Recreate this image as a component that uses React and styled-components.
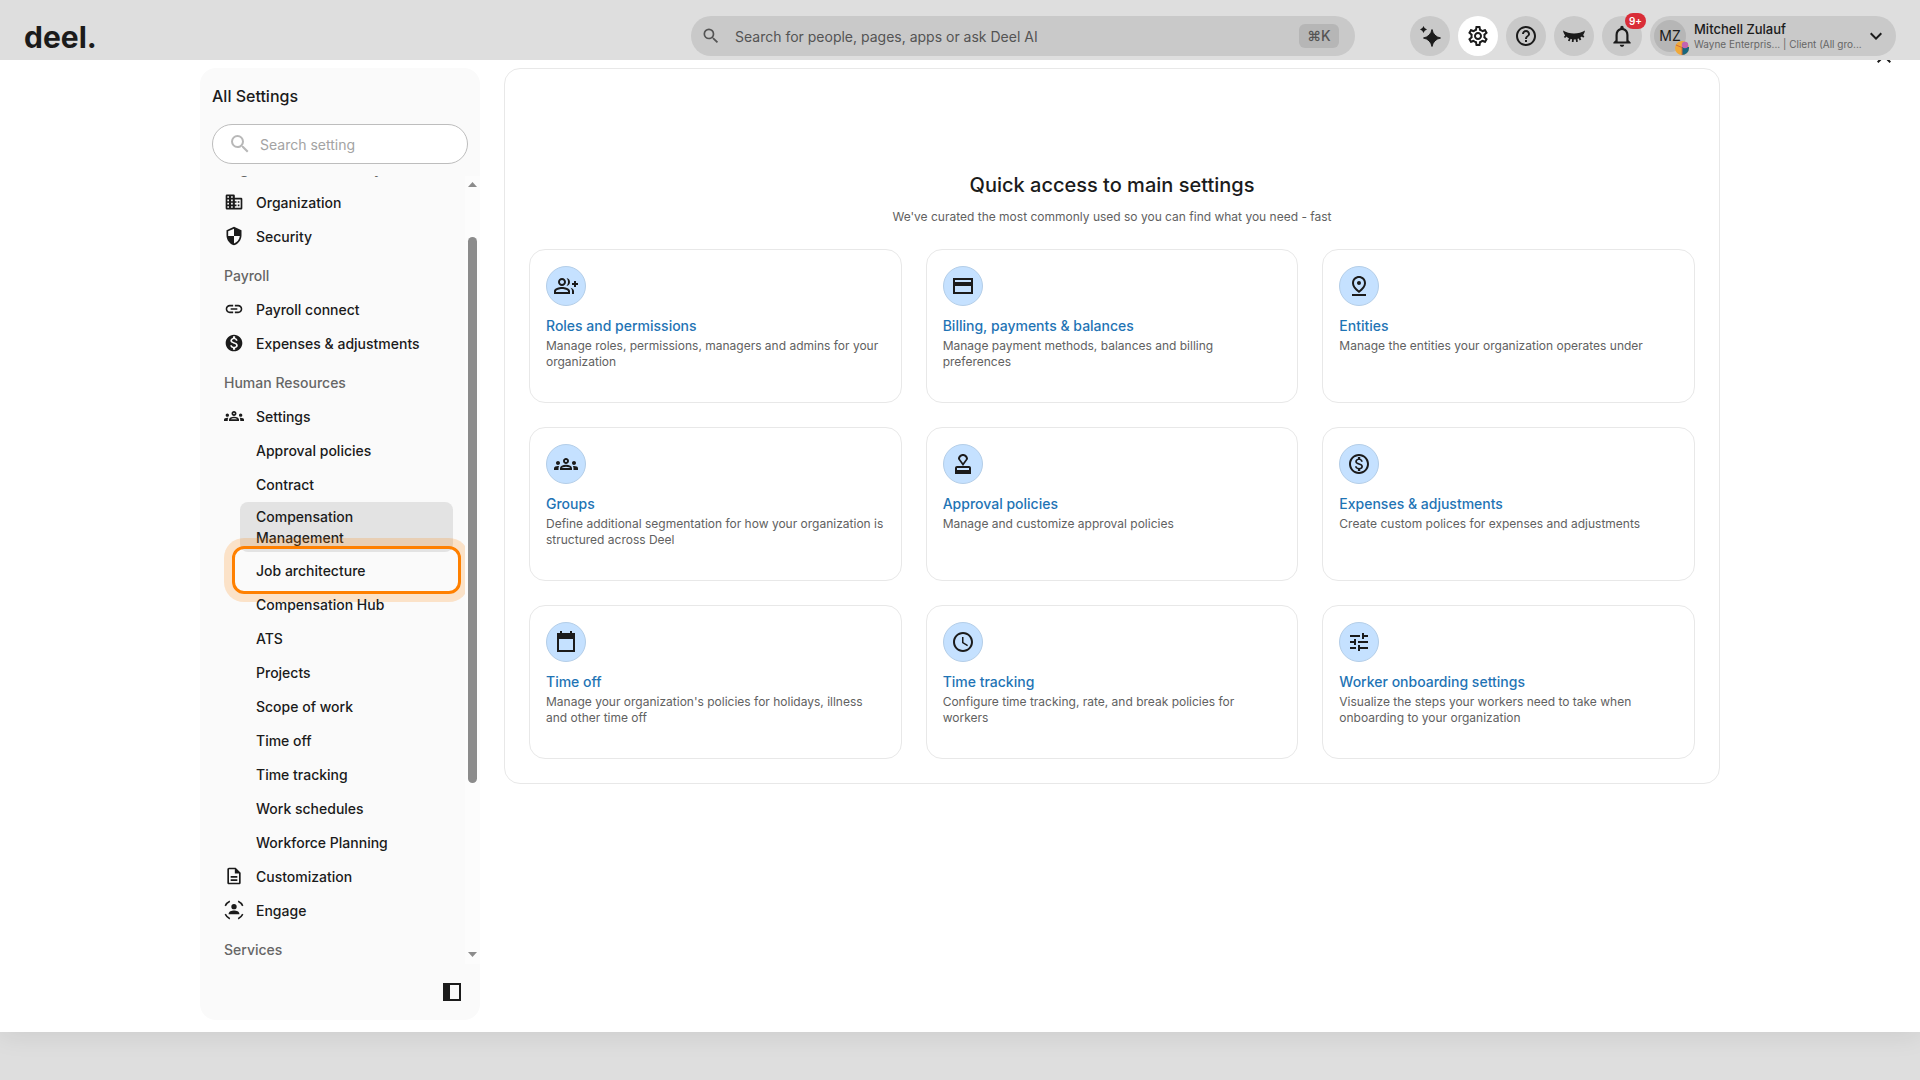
import React from "react";
import styled, { createGlobalStyle } from "styled-components";
import {
  MdAccessTime,
  MdClose,
  MdHelpOutline,
  MdKeyboardArrowDown,
  MdLink,
  MdMonetizationOn,
  MdNotificationsNone,
  MdOutlineApproval,
  MdOutlineDescription,
  MdOutlineGroups,
  MdOutlineMonetizationOn,
  MdOutlinePinDrop,
  MdOutlineSettings,
  MdSearch,
  MdSecurity,
  MdTune,
} from "react-icons/md";

const GlobalStyle = createGlobalStyle`
  * {
    box-sizing: border-box;
  }
  body {
    margin: 0;
    background: #dedede;
    color: #1b1b1b;
    font-family: Inter, "Liberation Sans", sans-serif;
    font-size: 14px;
  }
  button, input {
    font-family: inherit;
    font-size: inherit;
    color: inherit;
  }
  button {
    padding: 0;
    border: 0;
    background: none;
    cursor: pointer;
  }
  a {
    color: inherit;
    text-decoration: none;
  }
  h1, h2, h3, p, ul {
    margin: 0;
    padding: 0;
  }
  ul {
    list-style: none;
  }
  svg {
    display: block;
    flex: none;
  }
`;

const Page = styled.div`
  position: relative;
  min-height: 100vh;
  display: flex;
  flex-direction: column;
  padding-bottom: 48px;
`;

const Header = styled.header`
  position: relative;
  z-index: 2;
  display: flex;
  align-items: center;
  height: 60px;
  padding: 12px 24px 0;
  background: #dedede;
`;

const Logo = styled.a`
  margin-right: auto;
  padding-top: 2px;
  font-size: 30px;
  font-weight: 700;
  line-height: 40px;
`;

const HeaderSearch = styled.label`
  display: flex;
  align-items: center;
  flex: 0 1 664px;
  height: 40px;
  margin-right: 55px;
  padding: 0 16px 0 10px;
  gap: 14px;
  border-radius: 20px;
  background: #c9c9c9;
  color: #545454;
`;

const HeaderInput = styled.input`
  flex: 1;
  min-width: 0;
  padding: 0;
  border: 0;
  outline: 0;
  background: none;
  &::placeholder {
    color: #545454;
    opacity: 1;
  }
`;

const Shortcut = styled.kbd`
  width: 40px;
  border-radius: 6px;
  background: #b6b6b6;
  font-family: inherit;
  font-size: 14px;
  font-weight: 500;
  line-height: 24px;
  text-align: center;
`;

const Actions = styled.div`
  display: flex;
  gap: 8px;
`;

const RoundButton = styled.button`
  position: relative;
  display: flex;
  align-items: center;
  justify-content: center;
  width: 40px;
  height: 40px;
  border-radius: 50%;
  background: ${(props) => (props.$active ? "#ffffff" : "#c9c9c9")};
`;

const CountBadge = styled.span`
  position: absolute;
  top: -3px;
  right: -4px;
  padding: 0 4px;
  border-radius: 8px;
  background: #d92d37;
  color: white;
  font-size: 10px;
  font-weight: 600;
  line-height: 16px;
`;

const Profile = styled.button`
  display: flex;
  align-items: center;
  width: 246px;
  height: 40px;
  padding: 0 8px 0 4px;
  border-radius: 20px;
  background: #c9c9c9;
  text-align: left;
`;

const Avatar = styled.span`
  position: relative;
  flex: none;
  width: 32px;
  margin-right: 8px;
  border-radius: 50%;
  background: #b6b6b6;
  line-height: 32px;
  text-align: center;
`;

const AvatarBadge = styled.span`
  position: absolute;
  right: -3px;
  bottom: -3px;
`;

const ProfileText = styled.span`
  flex: 1;
  display: flex;
  flex-direction: column;
  min-width: 0;
  white-space: nowrap;
`;

const ProfileName = styled.span`
  font-size: 13px;
  font-weight: 500;
  line-height: 16px;
`;

const ProfileOrg = styled.span`
  color: #666666;
  font-size: 10px;
  line-height: 14px;
`;

const CloseButton = styled.button`
  position: absolute;
  top: 44px;
  right: 24px;
`;

const Main = styled.main`
  flex: 1;
  display: flex;
  justify-content: center;
  padding: 8px 24px 12px;
  background: white;
  box-shadow: 0 4px 24px rgba(0, 0, 0, 0.08);
`;

const Content = styled.div`
  flex: 0 1 1520px;
  display: flex;
  align-items: flex-start;
  gap: 24px;
`;

const Sidebar = styled.aside`
  flex: none;
  align-self: stretch;
  display: flex;
  flex-direction: column;
  width: 280px;
  border-radius: 16px;
  background: #fafafa;
`;

const SidebarTitle = styled.h2`
  padding: 16px 12px;
  font-size: 16px;
  font-weight: 500;
  line-height: 24px;
`;

const SidebarSearch = styled.label`
  display: flex;
  align-items: center;
  height: 40px;
  margin: 0 12px 12px;
  padding: 0 15px;
  gap: 8px;
  border: 1px solid #bdbdbd;
  border-radius: 20px;
  background: white;
  color: #b8b8b8;
`;

const SidebarInput = styled.input`
  flex: 1;
  min-width: 0;
  padding: 0;
  border: 0;
  outline: 0;
  background: none;
  &::placeholder {
    color: #a3a3a3;
    opacity: 1;
  }
`;

const NavArea = styled.div`
  display: flex;
  height: 788px;
  overflow: hidden;
`;

const Nav = styled.nav`
  flex: 1;
  margin-top: -30px;
`;

const GroupTitle = styled.h3`
  padding: 12px 24px 6px;
  color: #666666;
  font-size: 14px;
  font-weight: 500;
  line-height: 21px;
`;

const NavEntry = styled.li`
  display: flex;
  flex-direction: column;
`;

const NavItem = styled.a`
  display: flex;
  align-items: center;
  min-height: 32px;
  margin: 1px 12px;
  padding: 4px 12px;
  gap: 12px;
  border-radius: 8px;
  font-weight: 500;
  line-height: 21px;
`;

const SubItem = styled(NavItem)`
  position: relative;
  margin: 1px 12px 1px 40px;
  padding: 4px 16px;
  background: ${(props) => (props.$hovered ? "#e3e3e3" : "none")};
`;

const FocusRing = styled.span`
  position: absolute;
  inset: -8px;
  border: 3px solid #ff8000;
  border-radius: 12px;
  box-shadow: 0 0 0 8px rgba(255, 128, 0, 0.2);
`;

const ScrollTrack = styled.div`
  position: relative;
  z-index: 1;
  display: flex;
  flex-direction: column;
  align-items: center;
  width: 15px;
  padding: 6px 0 7px;
  background: #fcfcfc;
  color: #8b8b8b;
`;

const ScrollThumb = styled.div`
  width: 9px;
  height: 546px;
  margin: 50px 0 auto;
  border-radius: 5px;
  background: #8b8b8b;
`;

const SidebarFooter = styled.div`
  display: flex;
  justify-content: flex-end;
  padding: 16px 16px 0;
`;

const Panel = styled.section`
  flex: 1;
  padding: 104px 24px 24px;
  border: 1px solid #e8e8e8;
  border-radius: 16px;
`;

const PanelTitle = styled.h1`
  font-size: 20px;
  font-weight: 500;
  line-height: 24px;
  text-align: center;
`;

const PanelText = styled.p`
  margin: 12px 0 24px;
  color: #616161;
  font-size: 12px;
  line-height: 16px;
  text-align: center;
`;

const CardGrid = styled.div`
  display: grid;
  grid-template-columns: repeat(3, 1fr);
  gap: 24px;
`;

const Card = styled.a`
  padding: 16px;
  border: 1px solid #e8e8e8;
  border-radius: 16px;
`;

const CardIcon = styled.span`
  display: flex;
  align-items: center;
  justify-content: center;
  width: 40px;
  height: 40px;
  border: 1px solid #b4cee8;
  border-radius: 50%;
  background: #c5e1ff;
`;

const CardTitle = styled.h3`
  margin: 10px 0 2px;
  color: #1f74b5;
  font-size: 14px;
  font-weight: 500;
  line-height: 20px;
`;

const CardText = styled.p`
  min-height: 48px;
  color: #616161;
  font-size: 12px;
  line-height: 16px;
`;

const Glyph = ({ size = 24, children }) => (
  <svg width={size} height={size} viewBox="0 0 24 24" fill="currentColor">
    {children}
  </svg>
);

const SparkleIcon = () => (
  <Glyph>
    <path d="M14 5.500Q15.500 12.500 22.500 14Q15.500 15.500 14 22.500Q12.500 15.500 5.500 14Q12.500 12.500 14 5.500Z" stroke="currentColor" strokeLinejoin="round" />
    <path d="M5.500 2Q6.200 4.800 9 5.500Q6.200 6.200 5.500 9Q4.800 6.200 2 5.500Q4.800 4.800 5.500 2Z" />
  </Glyph>
);

const ClosedEyeIcon = () => (
  <Glyph>
    <path d="M1 6.500C7 10.500 17 10.500 23 6.500C22 12 17.500 15.500 12 15.500S2 12 1 6.500Z" />
    <path
      d="M4.500 11L2.500 13.500M8 14L6.800 17M11 14.500L10.700 18M14.500 14.500L15 17.800M17 13L18.500 16M19.500 11L21.800 13"
      stroke="currentColor"
      strokeWidth="1.800"
    />
  </Glyph>
);

const OfficeIcon = () => (
  <Glyph size={20}>
    <path
      fillRule="evenodd"
      d="M3.500 3H11.500Q13 3 13 4.500V7H20.500Q22 7 22 8.500V19.500Q22 21 20.500 21H3.500Q2 21 2 19.500V4.500Q2 3 3.500 3ZM4 5V7H6V5ZM8.500 5V7H10.500V5ZM4 9V11H6V9ZM8.500 9V11H10.500V9ZM4 13V15H6V13ZM8.500 13V15H10.500V13ZM4 17V19H6V17ZM8.500 17V19H10.500V17ZM13 9V11H15V13H13V15H15V17H13V19H20V9ZM16.500 11H18.500V13H16.500ZM16.500 15H18.500V17H16.500Z"
    />
  </Glyph>
);

const EngageIcon = () => (
  <Glyph size={20}>
    <circle cx="12" cy="8" r="3.200" />
    <path d="M5.500 17C5.500 13.800 9 12.600 12 12.600S18.500 13.800 18.500 17Z" />
    <path
      d="M1.500 7A11.500 11.500 0 0 1 7 1.500M17 1.500A11.500 11.500 0 0 1 22.500 7M22.500 17A11.500 11.500 0 0 1 17 22.500M7 22.500A11.500 11.500 0 0 1 1.500 17"
      fill="none"
      stroke="currentColor"
      strokeWidth="1.800"
    />
  </Glyph>
);

const GroupAddIcon = () => (
  <Glyph>
    <path d="M22 9V7h-2v2h-2v2h2v2h2v-2h2V9zM8 12c2.210 0 4-1.790 4-4s-1.790-4-4-4-4 1.790-4 4 1.790 4 4 4zm0-6c1.100 0 2 .9 2 2s-.9 2-2 2-2-.9-2-2 .9-2 2-2zM8 13c-2.670 0-8 1.340-8 4v3h16v-3c0-2.660-5.330-4-8-4zm6 5H2v-.99C2.200 16.290 5.300 15 8 15s5.800 1.290 6 2v1zM12.510 4.050C13.430 5.110 14 6.490 14 8s-.57 2.890-1.490 3.950C14.470 11.700 16 10.040 16 8s-1.530-3.700-3.490-3.950zM16.530 13.830C17.420 14.660 18 15.700 18 17v3h2v-3c0-1.450-1.590-2.510-3.470-3.170z" />
  </Glyph>
);

const CreditCardIcon = () => (
  <Glyph>
    <path d="M2 4v16h20V4H2zm18 14H4v-6h16v6zm0-10H4V6h16v2z" />
  </Glyph>
);

const CalendarIcon = () => (
  <Glyph>
    <path d="M21 3h-3V1h-2v2H8V1H6v2H3v19h18V3zm-2 17H5V9h14v11z" />
  </Glyph>
);

const PanelToggleIcon = () => (
  <svg width="24" height="24" viewBox="0 0 24 24">
    <path fill="currentColor" d="M3 3h18v18H3zM10 5v14h9V5z" fillRule="evenodd" />
  </svg>
);

const TeamIcon = () => (
  <svg width="14" height="14" viewBox="0 0 14 14">
    <circle cx="7" cy="7" r="7" fill="#f0a93a" />
    <path d="M7 6V14A7 7 0 0 0 14 7V6Z" fill="#17677f" />
    <circle cx="10" cy="4" r="3.200" fill="#c463b0" />
    <path d="M1 4L7 6.500V14" fill="none" stroke="#d06a3c" />
  </svg>
);

const Arrow = ({ down }) => (
  <svg width="9" height="5" viewBox="0 0 9 5" fill="currentColor">
    <path d={down ? "M0 0h9L4.500 5z" : "M0 5h9L4.500 0z"} />
  </svg>
);

const navGroups = [
  {
    title: "Organization & Security",
    items: [
      { label: "Organization", icon: <OfficeIcon /> },
      { label: "Security", icon: <MdSecurity size={20} /> },
    ],
  },
  {
    title: "Payroll",
    items: [
      { label: "Payroll connect", icon: <MdLink size={20} /> },
      { label: "Expenses & adjustments", icon: <MdMonetizationOn size={20} /> },
    ],
  },
  {
    title: "Human Resources",
    items: [
      {
        label: "Settings",
        icon: <MdOutlineGroups size={20} />,
        children: [
          { label: "Approval policies" },
          { label: "Contract" },
          { label: "Compensation Management", hovered: true },
          { label: "Job architecture", focused: true },
          { label: "Compensation Hub" },
          { label: "ATS" },
          { label: "Projects" },
          { label: "Scope of work" },
          { label: "Time off" },
          { label: "Time tracking" },
          { label: "Work schedules" },
          { label: "Workforce Planning" },
        ],
      },
      { label: "Customization", icon: <MdOutlineDescription size={20} /> },
      { label: "Engage", icon: <EngageIcon /> },
    ],
  },
  { title: "Services", items: [] },
];

const cards = [
  {
    title: "Roles and permissions",
    text: "Manage roles, permissions, managers and admins for your organization",
    icon: <GroupAddIcon />,
  },
  {
    title: "Billing, payments & balances",
    text: "Manage payment methods, balances and billing preferences",
    icon: <CreditCardIcon />,
  },
  {
    title: "Entities",
    text: "Manage the entities your organization operates under",
    icon: <MdOutlinePinDrop size={24} />,
  },
  {
    title: "Groups",
    text: "Define additional segmentation for how your organization is structured across Deel",
    icon: <MdOutlineGroups size={24} />,
  },
  {
    title: "Approval policies",
    text: "Manage and customize approval policies",
    icon: <MdOutlineApproval size={24} />,
  },
  {
    title: "Expenses & adjustments",
    text: "Create custom polices for expenses and adjustments",
    icon: <MdOutlineMonetizationOn size={24} />,
  },
  {
    title: "Time off",
    text: "Manage your organization's policies for holidays, illness and other time off",
    icon: <CalendarIcon />,
  },
  {
    title: "Time tracking",
    text: "Configure time tracking, rate, and break policies for workers",
    icon: <MdAccessTime size={24} />,
  },
  {
    title: "Worker onboarding settings",
    text: "Visualize the steps your workers need to take when onboarding to your organization",
    icon: <MdTune size={24} />,
  },
];

const TopBar = () => (
  <Header>
    <Logo href="#">deel.</Logo>
    <HeaderSearch>
      <MdSearch size={20} />
      <HeaderInput
        type="search"
        aria-label="Search"
        placeholder="Search for people, pages, apps or ask Deel AI"
      />
      <Shortcut>⌘K</Shortcut>
    </HeaderSearch>
    <Actions>
      <RoundButton aria-label="Deel AI">
        <SparkleIcon />
      </RoundButton>
      <RoundButton $active aria-label="Settings">
        <MdOutlineSettings size={24} />
      </RoundButton>
      <RoundButton aria-label="Help">
        <MdHelpOutline size={24} />
      </RoundButton>
      <RoundButton aria-label="Hide data">
        <ClosedEyeIcon />
      </RoundButton>
      <RoundButton aria-label="Notifications">
        <MdNotificationsNone size={26} />
        <CountBadge>9+</CountBadge>
      </RoundButton>
      <Profile>
        <Avatar>
          MZ
          <AvatarBadge>
            <TeamIcon />
          </AvatarBadge>
        </Avatar>
        <ProfileText>
          <ProfileName>Mitchell Zulauf</ProfileName>
          <ProfileOrg>Wayne Enterpris... | Client (All gro...</ProfileOrg>
        </ProfileText>
        <MdKeyboardArrowDown size={24} />
      </Profile>
    </Actions>
  </Header>
);

const NavGroup = ({ title, items }) => (
  <>
    <GroupTitle>{title}</GroupTitle>
    <ul>
      {items.map((item) => (
        <NavEntry key={item.label}>
          <NavItem href="#">
            {item.icon}
            {item.label}
          </NavItem>
          {item.children && (
            <ul>
              {item.children.map((child) => (
                <NavEntry key={child.label}>
                  <SubItem href="#" $hovered={child.hovered}>
                    {child.label}
                    {child.focused && <FocusRing />}
                  </SubItem>
                </NavEntry>
              ))}
            </ul>
          )}
        </NavEntry>
      ))}
    </ul>
  </>
);

const App = () => {
  return (
    <>
      <GlobalStyle />
      <Page>
        <TopBar />
        <CloseButton aria-label="Close settings">
          <MdClose size={24} />
        </CloseButton>
        <Main>
          <Content>
            <Sidebar>
              <SidebarTitle>All Settings</SidebarTitle>
              <SidebarSearch>
                <MdSearch size={24} />
                <SidebarInput
                  type="search"
                  aria-label="Search setting"
                  placeholder="Search setting"
                />
              </SidebarSearch>
              <NavArea>
                <Nav>
                  {navGroups.map((group) => (
                    <NavGroup key={group.title} {...group} />
                  ))}
                </Nav>
                <ScrollTrack>
                  <Arrow />
                  <ScrollThumb />
                  <Arrow down />
                </ScrollTrack>
              </NavArea>
              <SidebarFooter>
                <button aria-label="Collapse sidebar">
                  <PanelToggleIcon />
                </button>
              </SidebarFooter>
            </Sidebar>
            <Panel>
              <PanelTitle>Quick access to main settings</PanelTitle>
              <PanelText>
                We've curated the most commonly used so you can find what you
                need - fast
              </PanelText>
              <CardGrid>
                {cards.map((card) => (
                  <Card href="#" key={card.title}>
                    <CardIcon>{card.icon}</CardIcon>
                    <CardTitle>{card.title}</CardTitle>
                    <CardText>{card.text}</CardText>
                  </Card>
                ))}
              </CardGrid>
            </Panel>
          </Content>
        </Main>
      </Page>
    </>
  );
};

export default App;
